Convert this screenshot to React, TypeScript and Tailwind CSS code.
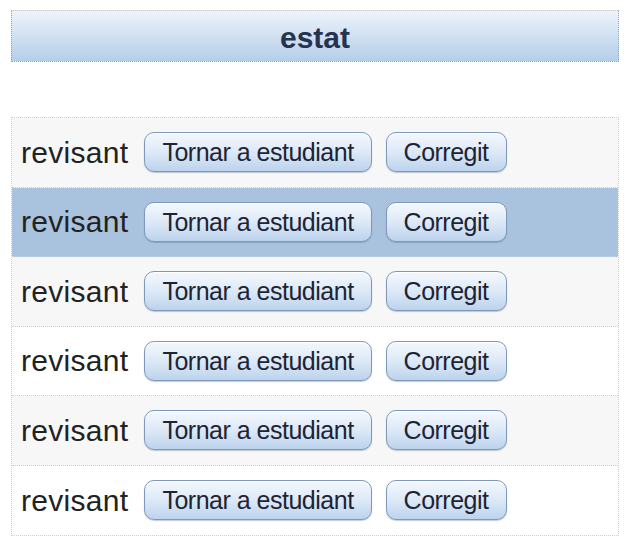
const rows = [false, true, false, false, false, false];

function Btn({ label }: { label: string }) {
  return (
    <button className="h-[40px] rounded-[10px] border border-[#7f97b8] bg-gradient-to-b from-[#f4f8fe] via-[#dde9f7] to-[#bcd3ed] px-[17px] pt-[1px] text-[25px] leading-none tracking-[-0.02em] text-[#1d2433] shadow-[inset_0_1px_0_#ffffff,0_1px_1px_rgba(90,110,140,0.35)]">
      {label}
    </button>
  );
}

export default function App() {
  return (
    <div className="min-h-[547px] bg-white pt-[10px] pl-[11px] font-['Liberation_Sans',Arial,sans-serif]">
      {/* Header */}
      <div className="flex h-[52px] w-[608px] items-center justify-center border border-dotted border-[#a3a3a3] border-t-[#e6e6e6] bg-gradient-to-b from-[#eef3fb] to-[#b4cee9]">
        <span className="pt-[2px] text-[30px] font-bold text-[#26334f]">estat</span>
      </div>

      {/* Rows */}
      <div className="mt-[55px] w-[608px] border border-dotted border-[#d6cfb3]">
        {rows.map((hl, i) => (
          <div
            key={i}
            className={
              "flex h-[69.5px] items-center gap-[16px] pl-[9px] " +
              (i < rows.length - 1 ? "border-b border-dotted border-[#d6cfb3] " : "") +
              (hl ? "bg-[#a9c2de]" : i % 2 === 0 ? "bg-[#f7f7f7]" : "bg-white")
            }
          >
            <span className="text-[30px] tracking-[0.01em] text-[#222222]">revisant</span>
            <div className="flex items-center gap-[14px]">
              <Btn label="Tornar a estudiant" />
              <Btn label="Corregit" />
            </div>
          </div>
        ))}
      </div>
    </div>
  );
}
